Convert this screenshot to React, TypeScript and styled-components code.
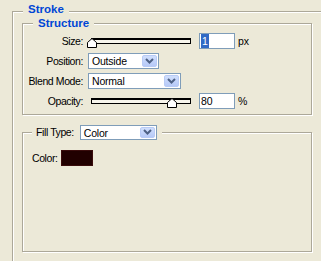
import React from "react";
import styled, { createGlobalStyle } from "styled-components";

const GlobalStyle = createGlobalStyle`
  html, body {
    margin: 0;
    padding: 0;
    background: #ece9d8;
    overflow: hidden;
  }
  body {
    font-family: "Liberation Sans", Arial, sans-serif;
  }
`;

const Chevron = () => (
  <svg width="9" height="6" viewBox="0 0 9 6">
    <polyline points="1,1 4.5,4.5 8,1" fill="none" stroke="#4d6185" strokeWidth="2" />
  </svg>
);

const ThumbShape = () => (
  <svg width="10" height="10" viewBox="0 0 10 10">
    <polygon points="0.5,4.5 5,0.5 9.5,4.5 9.5,9.5 0.5,9.5" fill="#fff" stroke="#000" strokeWidth="1" />
  </svg>
);

interface SliderProps {
  value: number;
}

const Slider: React.FC<SliderProps> = ({ value }) => (
  <SliderBox>
    <Track />
    <Thumb style={{ left: value - 1 }}>
      <ThumbShape />
    </Thumb>
  </SliderBox>
);

interface DropdownProps {
  width: number;
  height?: number;
  value: string;
}

const Dropdown: React.FC<DropdownProps> = ({ width, height = 16, value }) => (
  <Select $w={width} $h={height}>
    <SelectText>{value}</SelectText>
    <DropButton>
      <Chevron />
    </DropButton>
  </Select>
);

const App: React.FC = () => {
  return (
    <Page>
      <GlobalStyle />
      <Outer>
        <Title $lh={10} $pb={5}>Stroke</Title>
        <Stack>
          <Group $height={0}>
            <Title $lh={6} $pb={1}>Structure</Title>
            <Form>
              <Label>Size:</Label>
              <Controls>
                <Slider value={0} />
                <Field>
                  <Selected>1</Selected>
                </Field>
                <Unit>px</Unit>
              </Controls>

              <Label>Position:</Label>
              <Controls>
                <Dropdown width={71} value="Outside" />
              </Controls>

              <Label>Blend Mode:</Label>
              <Controls>
                <Dropdown width={93} value="Normal" />
              </Controls>

              <Label>Opacity:</Label>
              <Controls>
                <Slider value={80} />
                <Field>80</Field>
                <Unit>%</Unit>
              </Controls>
            </Form>
          </Group>

          <Group $height={128}>
            <FillLegend>
              <Label>Fill Type:</Label>
              <Dropdown width={77} height={15} value="Color" />
            </FillLegend>
            <ColorRow>
              <Label>Color:</Label>
              <Swatch />
            </ColorRow>
          </Group>
        </Stack>
      </Outer>
    </Page>
  );
};
export default App;

const Page = styled.div`
  width: 321px;
  height: 261px;
  overflow: hidden;
  box-sizing: border-box;
  padding: 4px 0 0 12px;
`;

const Outer = styled.fieldset`
  margin: 0;
  padding: 0;
  min-width: 0;
  width: 400px;
  height: 320px;
  box-sizing: border-box;
  border: 1px solid #aca899;
  box-shadow: inset 1px 1px 0 #fff;
`;

const Group = styled.fieldset<{ $height: number }>`
  margin: 0;
  padding: 0;
  min-width: 0;
  width: 290px;
  height: ${(p) => (p.$height ? `${p.$height}px` : "auto")};
  box-sizing: border-box;
  border: 1px solid #aca899;
  box-shadow: inset 1px 1px 0 #fff, 1px 1px 0 #fff;
`;

const Title = styled.legend<{ $lh: number; $pb: number }>`
  margin-left: 10px;
  padding: 0 5px ${(p) => p.$pb}px;
  font: bold 11.5px / ${(p) => p.$lh}px "Liberation Sans", Arial, sans-serif;
  color: #0046d5;
  background: #ece9d8;
`;

const Stack = styled.div`
  display: flex;
  flex-direction: column;
  gap: 9px;
  padding: 1px 0 0 9px;
`;

const Form = styled.div`
  display: grid;
  grid-template-columns: 60px auto;
  grid-auto-rows: 16px;
  column-gap: 5px;
  row-gap: 4px;
  align-items: center;
  padding: 6px 0 5px 0;
`;

const Label = styled.span`
  text-align: right;
  font-size: 10.5px;
  line-height: 16px;
  letter-spacing: -0.4px;
  color: #000;
  white-space: nowrap;
`;

const Controls = styled.div`
  display: flex;
  align-items: center;
  height: 16px;
`;

const SliderBox = styled.div`
  position: relative;
  flex: none;
  width: 111px;
  height: 16px;
  box-sizing: border-box;
  padding: 5px 0 0 3px;
`;

const Track = styled.div`
  width: 100px;
  height: 6px;
  box-sizing: border-box;
  border: 1px solid #000;
  border-top-width: 2px;
  background: #f7f5ec;
`;

const Thumb = styled.div`
  position: absolute;
  top: 5px;
  width: 10px;
  height: 10px;
  line-height: 0;
`;

const Field = styled.div`
  flex: none;
  width: 36px;
  height: 16px;
  box-sizing: border-box;
  border: 1px solid #7f9db9;
  background: #fff;
  padding-left: 1px;
  font-size: 10.5px;
  line-height: 14px;
  color: #000;
`;

const Selected = styled.span`
  display: inline-block;
  height: 14px;
  padding: 0 1px;
  background: #316ac5;
  color: #fff;
`;

const Unit = styled.span`
  margin-left: 3px;
  font-size: 10.5px;
  line-height: 16px;
  color: #000;
`;

const Select = styled.div<{ $w: number; $h: number }>`
  display: flex;
  align-items: stretch;
  width: ${(p) => p.$w}px;
  height: ${(p) => p.$h}px;
  box-sizing: border-box;
  border: 1px solid #7f9db9;
  background: #fff;
  padding: 1px;
`;

const SelectText = styled.span`
  flex: 1;
  padding-left: 2px;
  font-size: 10.5px;
  line-height: 12px;
  letter-spacing: -0.2px;
  color: #000;
  white-space: nowrap;
`;

const DropButton = styled.div`
  flex: none;
  width: 15px;
  box-sizing: border-box;
  border: 1px solid #b8cbf6;
  border-radius: 2px;
  background: linear-gradient(#d0dffd, #b6c9f7);
  display: flex;
  align-items: center;
  justify-content: center;
`;

const FillLegend = styled.legend`
  display: flex;
  align-items: center;
  gap: 6px;
  margin-left: 9px;
  padding: 0 5px 0 4px;
  background: #ece9d8;
`;

const ColorRow = styled.div`
  display: flex;
  align-items: center;
  gap: 3px;
  padding: 10px 0 0 9px;
`;

const Swatch = styled.div`
  width: 32px;
  height: 16px;
  box-sizing: border-box;
  border: 1px solid #3a0c0c;
  background: #210000;
`;
